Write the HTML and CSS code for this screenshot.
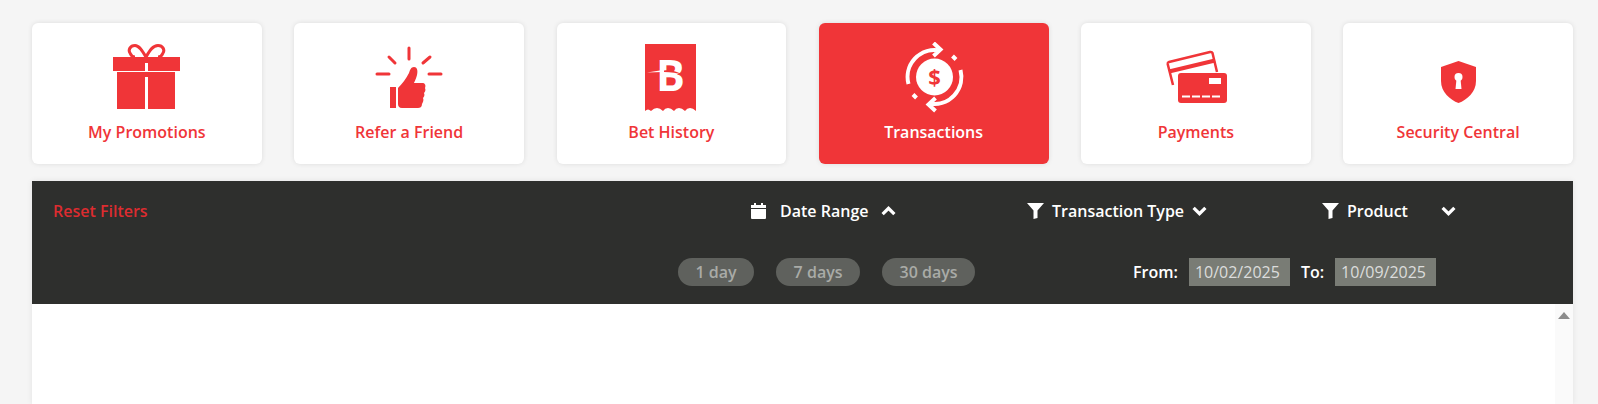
FILE: index.html
```html
<!DOCTYPE html>
<html lang="en">
<head>
    <meta charset="UTF-8">
    <meta name="viewport" content="width=device-width, initial-scale=1.0">
    <title>Transactions</title>
    <link rel="stylesheet" href="styles.css">
</head>
<body>
    <nav class="tiles">
        <a class="tile" href="#">
            <svg class="tile-icon" viewBox="0 0 80 72">
                <path class="bow" d="M39 15C35 8 32 3.500 28 3.500C23 3.500 21 8 23 11C24 13.500 26 15 28 15M39 15C43 8 46 3.500 51 3.500C56 3.500 58 8 56 11C55 13.500 53 15 51 15"/>
                <path class="fill" d="M6 15H73V29H41V21H38V29H6Z"/>
                <path class="fill" d="M10 30H68V67H41V35H38V67H10Z"/>
            </svg>
            <span>My Promotions</span>
        </a>
        <a class="tile" href="#">
            <svg class="tile-icon" viewBox="0 0 80 72">
                <path class="ray" d="M40 6V17M20 15L26 21M61 15L54 21M8 32H20M60 32H72"/>
                <rect class="fill" x="21" y="45" width="6" height="21"/>
                <path class="fill" d="M29 46C33 42 37 37 40 31C41 28 42 25 45 25C48 25 49 28 48 33C47 37 45 41 45 41H53C56 41 57 43 56 46C57 48 56 50 55 51C56 53 55 55 54 56C55 58 54 60 53 62C53 65 51 66 49 66H33C30 66 29 64 29 62Z"/>
            </svg>
            <span>Refer a Friend</span>
        </a>
        <a class="tile" href="#">
            <svg class="tile-icon" viewBox="0 0 80 72">
                <path class="fill" d="M14 2H65V69Q62 66 59 66T54 69Q51 66 48 66T43 69Q40 66 37 66T32 69Q29 66 26 66T20 69Q17 66 14 69Z"/>
                <text class="bet-letter" x="25" y="49">B</text>
                <path class="streak" d="M16 30.500L32 28V30Z"/>
                <path class="swoosh" d="M33 28.500C40 27.500 47 29.500 53 33.500C46 30.500 40 30 33 30Z"/>
            </svg>
            <span>Bet History</span>
        </a>
        <a class="tile active" href="#">
            <svg class="tile-icon" viewBox="0 0 80 72">
                <g class="swap" transform="translate(1.500 0)">
                    <path d="M13 42A27 27 0 0 1 44 8.500M38 1L45 7.500L38 14M57 14L60.500 17.500"/>
                    <path d="M65 28A27 27 0 0 1 34 61.500M40 69L33 62.500L40 56M21 56L17.500 52.500"/>
                    <circle class="coin" cx="39" cy="35" r="18.500"/>
                    <text class="coin-sign" x="39" y="42.500">$</text>
                </g>
            </svg>
            <span>Transactions</span>
        </a>
        <a class="tile" href="#">
            <svg class="tile-icon" viewBox="0 0 80 72">
                <path class="card-back" d="M17 43L11.700 22Q11.500 20.500 13 20L54 10Q56 9.700 56.500 11L61 30"/>
                <path class="card-stripe" d="M13 29.500L59 18.500"/>
                <rect class="fill" x="22" y="31" width="49" height="30" rx="3"/>
                <rect class="card-chip" x="53" y="36" width="12" height="6"/>
                <path class="card-digits" d="M26 54.500H34M36 54.500H44M46 54.500H54M56 54.500H64"/>
            </svg>
            <span>Payments</span>
        </a>
        <a class="tile" href="#">
            <svg class="tile-icon" viewBox="0 0 80 72">
                <path class="fill" d="M40.500 19L58 25V39C58 50 49 58 40.500 61C32 58 23 50 23 39V25Z"/>
                <circle class="card-chip" cx="40.500" cy="35" r="4"/>
                <path class="card-chip" d="M38.500 37H42.500L43.500 47H37.500Z"/>
            </svg>
            <span>Security Central</span>
        </a>
    </nav>

    <section class="panel">
        <div class="filters">
            <div class="filter-row">
                <a class="reset" href="#">Reset Filters</a>
                <div class="filter date-filter">
                    <svg class="filter-icon" viewBox="0 0 15 16">
                        <path d="M3 0H5V2H10V0H12V2H15V5H0V2H3ZM0 6H15V15Q15 16 14 16H1Q0 16 0 15Z"/>
                    </svg>
                    <span>Date Range</span>
                    <svg class="chevron" viewBox="0 0 14 9"><path d="M1.500 7.500L7 2L12.500 7.500"/></svg>
                </div>
                <div class="filter type-filter">
                    <svg class="filter-icon funnel" viewBox="0 0 17 16">
                        <path d="M0 0H17L10.500 7.500V15L6.500 16V7.500Z"/>
                    </svg>
                    <span>Transaction Type</span>
                    <svg class="chevron" viewBox="0 0 14 9"><path d="M1.500 1.500L7 7L12.500 1.500"/></svg>
                </div>
                <div class="filter product-filter">
                    <svg class="filter-icon funnel" viewBox="0 0 17 16">
                        <path d="M0 0H17L10.500 7.500V15L6.500 16V7.500Z"/>
                    </svg>
                    <span>Product</span>
                    <svg class="chevron" viewBox="0 0 14 9"><path d="M1.500 1.500L7 7L12.500 1.500"/></svg>
                </div>
            </div>
            <div class="range-row">
                <div class="pills">
                    <button class="pill">1 day</button>
                    <button class="pill">7 days</button>
                    <button class="pill">30 days</button>
                </div>
                <div class="dates">
                    <label for="date_from">From:</label>
                    <input id="date_from" type="text" value="10/02/2025">
                    <label for="date_to">To:</label>
                    <input id="date_to" type="text" value="10/09/2025">
                </div>
            </div>
        </div>
        <div class="results">
            <div class="scrollbar"><div class="scroll-up"></div></div>
        </div>
    </section>
</body>
</html>
```

FILE: styles.css
```css
body {
    margin: 0;
    height: 100vh;
    overflow: hidden;
    display: flex;
    flex-direction: column;
    background-color: #f5f5f5;
    font-family: "Open Sans", "Noto Sans", sans-serif;
    font-weight: 600;
    color: #fff;
}

a {
    text-decoration: none;
}

.tiles {
    display: grid;
    grid-template-columns: repeat(6, 1fr);
    gap: 32.500px;
    padding: 23px 25px 0 32px;
}

.tile {
    height: 141px;
    background: #fff;
    border-radius: 6px;
    box-shadow: 0 0 5px rgba(0, 0, 0, 0.1);
    color: #f03538;
    font-size: 16px;
    font-weight: 560;
    line-height: 20px;
    display: flex;
    flex-direction: column;
    align-items: center;
    padding-top: 19px;
    box-sizing: border-box;
}

.tile-icon {
    width: 80px;
    height: 72px;
    margin-bottom: 8px;
}

.tile.active {
    background: #f03538;
    color: #fff;
    font-weight: 600;
}

.fill {
    fill: #f03538;
}

.bow {
    fill: none;
    stroke: #f03538;
    stroke-width: 3;
}

.ray {
    fill: none;
    stroke: #f03538;
    stroke-width: 3;
    stroke-linecap: round;
}

.bet-letter {
    fill: #fff;
    font-size: 43px;
    font-weight: 700;
}

.streak {
    fill: #fff;
}

.swoosh {
    fill: #f03538;
}

.swap path {
    fill: none;
    stroke: #fff;
    stroke-width: 4;
}

.coin {
    fill: #fff;
}

.coin-sign {
    fill: #f03538;
    font-size: 22px;
    font-weight: 700;
    text-anchor: middle;
}

.card-back {
    fill: none;
    stroke: #f03538;
    stroke-width: 2.500;
}

.card-stripe {
    stroke: #f03538;
    stroke-width: 4;
}

.card-chip {
    fill: #fff;
}

.card-digits {
    stroke: #fff;
    stroke-width: 2;
}

.panel {
    flex: 1;
    display: flex;
    flex-direction: column;
    margin: 17px 25px 0 32px;
    background: #fff;
    box-shadow: 0 0 6px rgba(0, 0, 0, 0.08);
}

.filters {
    height: 123px;
    background-color: #2e2f2d;
    font-size: 16px;
}

.filter-row {
    display: grid;
    grid-template-columns: 698px 276px 295px 1fr;
    align-items: center;
    height: 60px;
    padding-left: 21px;
}

.reset {
    color: #dd2c30;
}

.filter {
    display: flex;
    align-items: center;
}

.filter-icon {
    width: 15px;
    height: 16px;
    fill: #fff;
    margin-right: 14px;
}

.filter-icon.funnel {
    width: 17px;
    margin-right: 8px;
}

.chevron {
    width: 15px;
    height: 10px;
    fill: none;
    stroke: #fff;
    stroke-width: 3;
    margin-left: 13px;
}

.type-filter .chevron {
    margin-left: 8px;
}

.product-filter .chevron {
    margin-left: 33px;
}

.range-row {
    display: flex;
    align-items: center;
    padding-left: 646px;
    height: 62px;
}

.pills {
    display: flex;
    gap: 22px;
}

.pill {
    height: 28px;
    padding: 0 17.500px;
    border: none;
    border-radius: 14px;
    background-color: #5f615d;
    color: #a9aba7;
    font-family: inherit;
    font-size: 16px;
    font-weight: 600;
}

.dates {
    display: flex;
    align-items: center;
    margin-left: 158px;
}

.dates input {
    width: 101px;
    height: 28px;
    box-sizing: border-box;
    padding: 0 6px;
    border: none;
    border-radius: 0;
    background-color: #797c75;
    color: #dcdcdc;
    font-family: inherit;
    font-size: 16px;
    margin: 0 11px;
}

.results {
    flex: 1;
    display: flex;
    justify-content: flex-end;
}

.scrollbar {
    width: 18px;
    background-color: #fafafa;
    padding-top: 8px;
    box-sizing: border-box;
}

.scroll-up {
    width: 0;
    margin-left: 3px;
    border-left: 6.500px solid transparent;
    border-right: 6.500px solid transparent;
    border-bottom: 7px solid #8c8c8c;
}
```
